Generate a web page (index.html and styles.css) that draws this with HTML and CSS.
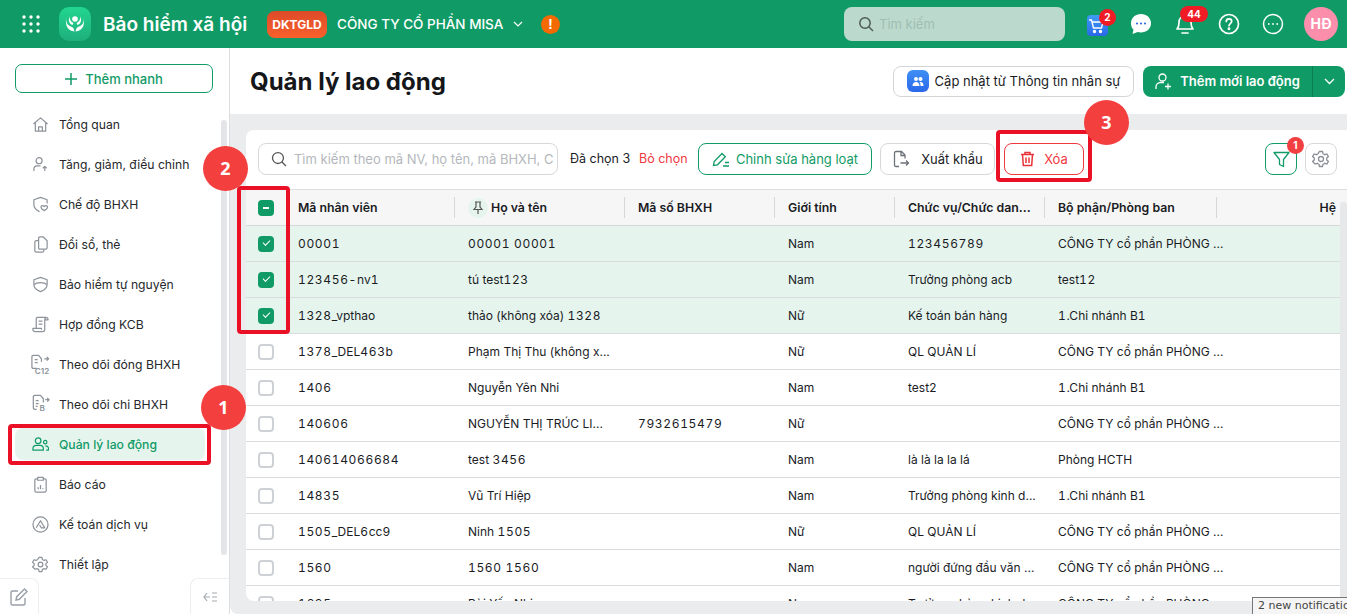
FILE: index.html
```html
<!DOCTYPE html>
<html lang="vi">
<head>
  <meta charset="UTF-8" />
  <title>Bảo hiểm xã hội</title>
  <link rel="stylesheet" href="styles.css">
</head>
<body>

  <!-- thanh trên cùng -->
  <header class="topbar">
    <svg class="waffle" width="18" height="18" viewBox="0 0 18 18" fill="#fff">
      <circle cx="2" cy="2" r="1.7"/><circle cx="9" cy="2" r="1.7"/><circle cx="16" cy="2" r="1.7"/>
      <circle cx="2" cy="9" r="1.7"/><circle cx="9" cy="9" r="1.7"/><circle cx="16" cy="9" r="1.7"/>
      <circle cx="2" cy="16" r="1.7"/><circle cx="9" cy="16" r="1.7"/><circle cx="16" cy="16" r="1.7"/>
    </svg>
    <div class="logo">
      <svg width="24" height="24" viewBox="0 0 24 24" fill="#fff">
        <circle cx="12" cy="7" r="2.8"/>
        <path d="M3 6c0 6 3 8 6 9 1 .4 2 1.500 2.400 4.500-3-.5-7-2-8-6.500-.4-2-.6-5-.4-7z"/>
        <path d="M21 6c0 6-3 8-6 9-1 .4-2 1.500-2.400 4.500 3-.5 7-2 8-6.500.4-2 .6-5 .4-7z"/>
        <path d="M6.500 4.500c0 3 1.500 5.500 4 6.500l-1 2c-3-1-4.500-4-3-8.500zM17.500 4.500c0 3-1.500 5.500-4 6.500l1 2c3-1 4.500-4 3-8.500z"/>
      </svg>
    </div>
    <div class="app-name">Bảo hiểm xã hội</div>
    <div class="org-badge">DKTGLD</div>
    <div class="org-name">CÔNG TY CỔ PHẦN MISA</div>
    <svg class="org-caret" width="10" height="6" viewBox="0 0 10 6" fill="none" stroke="#fff" stroke-width="1.200"><path d="M1 1l4 4 4-4"/></svg>
    <div class="warn">!</div>

    <div class="top-search">
      <svg width="16" height="16" viewBox="0 0 16 16" fill="none" stroke="#4d5a55" stroke-width="1.500"><circle cx="7" cy="7" r="5.200"/><path d="M11 11l4 4"/></svg>
      <span>Tìm kiếm</span>
    </div>

    <div class="top-icons">
      <div class="top-icon">
        <div class="cart">
          <svg width="18" height="18" viewBox="0 0 18 18" fill="none" stroke="#fff" stroke-width="1.400"><path d="M1 3h2.500l2 8h8l1.500-6H4.500"/><circle cx="6.500" cy="14.500" r="1" fill="#fff"/><circle cx="12.500" cy="14.500" r="1" fill="#fff"/></svg>
        </div>
        <span class="count count-cart">2</span>
      </div>
      <div class="top-icon">
        <svg width="22" height="22" viewBox="0 0 22 22"><path d="M11 1c5.500 0 10 3.800 10 9.200s-4.500 9.300-10 9.300c-1.200 0-2.400-.2-3.400-.5L2.500 21l1-4.200C1.900 15.100 1 12.800 1 10.200 1 4.800 5.500 1 11 1z" fill="#fff"/><circle cx="7" cy="10.500" r="1.100" fill="#2f6fe0"/><circle cx="11" cy="10.500" r="1.100" fill="#2f6fe0"/><circle cx="15" cy="10.500" r="1.100" fill="#2f6fe0"/></svg>
      </div>
      <div class="top-icon">
        <svg width="22" height="24" viewBox="0 0 22 24" fill="none" stroke="#fff" stroke-width="1.700"><path d="M3 17c1.500-1.500 2-3 2-6.500C5 6.500 7.500 4 11 4s6 2.500 6 6.500c0 3.500.5 5 2 6.500z" stroke-linejoin="round"/><path d="M8 21h6" stroke-linecap="round"/></svg>
        <span class="count count-bell">44</span>
      </div>
      <div class="top-icon">
        <svg width="22" height="22" viewBox="0 0 22 22" fill="none" stroke="#fff" stroke-width="1.700"><circle cx="11" cy="11" r="9.500"/><path d="M8.300 8.500c0-1.600 1.200-2.600 2.700-2.600s2.700 1 2.700 2.400c0 2.200-2.700 2.300-2.700 4.400" stroke-linecap="round"/><circle cx="11" cy="15.800" r=".6" fill="#fff"/></svg>
      </div>
      <div class="top-icon">
        <svg width="22" height="22" viewBox="0 0 22 22" fill="none" stroke="#fff" stroke-width="1.500"><circle cx="11" cy="11" r="9.500"/><circle cx="6.800" cy="11" r=".9" fill="#fff" stroke="none"/><circle cx="11" cy="11" r=".9" fill="#fff" stroke="none"/><circle cx="15.200" cy="11" r=".9" fill="#fff" stroke="none"/></svg>
      </div>
    </div>
    <div class="avatar">HĐ</div>
  </header>

  <div class="layout">
    <!-- menu trái -->
    <aside class="sidebar">
      <button class="quick-add">
        <svg width="12" height="12" viewBox="0 0 12 12" stroke="#119b66" stroke-width="1.500"><path d="M6 0v12M0 6h12"/></svg>
        Thêm nhanh
      </button>
      <nav class="menu">
        <div class="menu-item">
          <svg class="menu-icon" viewBox="0 0 18 18"><path d="M1.500 8.500L9 2l7.500 6.500M3.500 7v9h11V7M7 16v-4.500h4V16"/></svg>Tổng quan
        </div>
        <div class="menu-item">
          <svg class="menu-icon" viewBox="0 0 18 18"><circle cx="7.500" cy="5" r="3.200"/><path d="M2 16v-2c0-2 1.500-3.500 3.500-3.500h3.500M13.500 16v-5M11.500 13l2-2 2 2"/></svg>Tăng, giảm, điều chỉnh
        </div>
        <div class="menu-item">
          <svg class="menu-icon" viewBox="0 0 18 18"><path d="M16 8V4l-7-2.500L2 4v5c0 3.500 2.500 6 6 7.500"/><path d="M13 11l1-.6c1-.5 2.500.2 2.500 1.500 0 1.500-2 2.800-3.500 3.600-1.500-.8-3.500-2.100-3.500-3.600 0-1.300 1.500-2 2.500-1.500z"/></svg>Chế độ BHXH
        </div>
        <div class="menu-item">
          <svg class="menu-icon" viewBox="0 0 18 18"><path d="M7 5H4.500C3.500 5 3 5.500 3 6.500v9c0 1 .5 1.500 1.500 1.500H11c1 0 1.500-.5 1.500-1.500V14"/><path d="M7 2.500C7 1.500 7.500 1 8.500 1H12l4 4v7.500c0 1-.5 1.500-1.500 1.500h-6C7.500 14 7 13.500 7 12.500z"/></svg>Đổi sổ, thẻ
        </div>
        <div class="menu-item">
          <svg class="menu-icon" viewBox="0 0 18 18"><path d="M9 1.500l7 2.500v5c0 3.500-3 6-7 7.500-4-1.500-7-4-7-7.500V4z"/><path d="M2.500 9C5 6.500 13 6.500 15.500 9"/></svg>Bảo hiểm tự nguyện
        </div>
        <div class="menu-item">
          <svg class="menu-icon" viewBox="0 0 18 18"><path d="M4.500 13V3c0-1 .5-1.500 1.500-1.500h9C14 2 13.500 3 13.500 4v10c0 1.500-1 2.500-2 2.500H3c-1 0-2-.8-2-2v-1.500h9v1.500M7 5.500h4M7 8.500h4M13.500 4H17c0-1.500-.7-2.500-2-2.500"/></svg>Hợp đồng KCB
        </div>
        <div class="menu-item">
          <svg class="menu-icon wide" viewBox="0 0 22 22"><path d="M7 15H3.500C2.500 15 2 14.500 2 13.500V3C2 2 2.500 1.500 3.500 1.500H9L12 5v3M5 6h3M5 9h3M15 5h4M17.500 3l2 2-2 2"/><text x="5" y="21" class="menu-tag">C12</text></svg>Theo dõi đóng BHXH
        </div>
        <div class="menu-item">
          <svg class="menu-icon wide" viewBox="0 0 22 22"><path d="M7 16H5c-1 0-1.500-.5-1.500-1.500V3C3.500 2 4 1.500 5 1.500h6L14 5v4M6 7h3M6 10h3M6 13h2M16 6h3M18 4l2 2-2 2"/><text x="10" y="18" class="menu-tag">B</text></svg>Theo dõi chi BHXH
        </div>
        <div class="menu-item active">
          <svg class="menu-icon" viewBox="0 0 18 18"><circle cx="6.500" cy="5" r="3"/><circle cx="14" cy="6.500" r="1.800"/><path d="M1 15v-1.500C1 11.500 2.500 10 4.500 10h4c2 0 3.500 1.500 3.500 3.500V15zM14 10.500c2 0 3.500 1.500 3.500 3V15H15"/></svg>Quản lý lao động
        </div>
        <div class="menu-item">
          <svg class="menu-icon" viewBox="0 0 18 18"><path d="M6 3H4.500C3.500 3 3 3.500 3 4.500v11c0 1 .5 1.500 1.500 1.500h9c1 0 1.500-.5 1.500-1.500v-11c0-1-.5-1.500-1.500-1.500H12M6 1.500h6v3H6zM6.500 14v-2M9 14V9.500M11.500 14v-1"/></svg>Báo cáo
        </div>
        <div class="menu-item">
          <svg class="menu-icon" viewBox="0 0 18 18"><circle cx="9" cy="9" r="8"/><path d="M4.500 12.500L9 5l4.500 7.500H10L8 9.500"/></svg>Kế toán dịch vụ
        </div>
        <div class="menu-item">
          <svg class="menu-icon" viewBox="0 0 18 18"><circle cx="9" cy="9" r="2.500"/><path d="M7.500 1.500h3l.5 2.200 1.700 1 2.200-.7 1.500 2.600-1.700 1.500v1.800l1.700 1.500-1.500 2.600-2.200-.7-1.700 1-.5 2.200h-3l-.5-2.200-1.700-1-2.200.7L.6 11.400l1.700-1.500V8.100L.6 6.600l1.500-2.600 2.200.7 1.700-1z"/></svg>Thiết lập
        </div>
      </nav>
      <div class="side-bottom">
        <div class="corner-btn corner-left">
          <svg width="20" height="20" viewBox="0 0 20 20" fill="none" stroke="#9aa0a8" stroke-width="1.400"><path d="M9 4H3.500C2.500 4 2 4.500 2 5.500v11c0 1 .5 1.500 1.500 1.500h11c1 0 1.500-.5 1.500-1.500V11"/><path d="M7 13l.7-3.300L15.500 2 18 4.500l-7.700 7.800z"/></svg>
        </div>
        <div class="corner-btn corner-right">
          <svg width="14" height="10" viewBox="0 0 14 10" fill="none" stroke="#a4a9b0" stroke-width="1.200"><path d="M4 1L1 5l3 4M1 5h6M9 1h5M9 5h5M9 9h5"/></svg>
        </div>
      </div>
      <div class="side-scroll"></div>
    </aside>

    <main class="content">
      <div class="page-head">
        <h1>Quản lý lao động</h1>
        <button class="btn-sync">
          <span class="sync-icon">
            <svg width="14" height="12" viewBox="0 0 14 12" fill="#fff"><circle cx="5" cy="4" r="2"/><circle cx="9.500" cy="4" r="2"/><path d="M1.500 11c0-2.500 1.500-4 3.500-4s3.500 1.500 3.500 4zM9.500 11h3c0-2.500-1-4-3-4-.5 0-.8 0-1 .2 1 .8 1 2.300 1 3.800z"/></svg>
          </span>
          Cập nhật từ Thông tin nhân sự
        </button>
        <div class="btn-add">
          <div class="btn-add-main">
            <svg width="17" height="17" viewBox="0 0 17 17" fill="none" stroke="#fff" stroke-width="1.300"><circle cx="7.500" cy="4.500" r="3.500"/><path d="M1 16v-2c0-2.500 2-4.500 4.500-4.500H9M13 10.500v6M10 13.500h6"/></svg>
            Thêm mới lao động
          </div>
          <div class="btn-add-more">
            <svg width="11" height="7" viewBox="0 0 11 7" fill="none" stroke="#fff" stroke-width="1.300"><path d="M1 1l4.500 4.500L10 1"/></svg>
          </div>
        </div>
      </div>

      <div class="panel-wrap">
        <section class="panel">
          <div class="toolbar">
            <div class="list-search">
              <svg width="16" height="16" viewBox="0 0 16 16" fill="none" stroke="#555" stroke-width="1.300"><circle cx="7" cy="7" r="5.500"/><path d="M11 11l4 4"/></svg>
              <span>Tìm kiếm theo mã NV, họ tên, mã BHXH, C</span>
            </div>
            <span class="picked">Đã chọn 3</span>
            <span class="unpick">Bỏ chọn</span>
            <button class="btn btn-green">
              <svg width="18" height="16" viewBox="0 0 18 16" fill="none" stroke="#119b66" stroke-width="1.300"><path d="M1.500 14.500l.7-4L10 2.500l3.300 3.300-7.800 8zM11 15h6M13 11.500h4"/></svg>
              Chỉnh sửa hàng loạt
            </button>
            <button class="btn btn-plain">
              <svg width="18" height="18" viewBox="0 0 18 18" fill="none" stroke="#6d7279" stroke-width="1.300"><path d="M7 16.500H4C3 16.500 2.500 16 2.500 15V3c0-1 .5-1.500 1.500-1.500h5.500L13 5v3.500M9 2v3.500h4M8.500 13H16.500M14 10.500l2.500 2.500-2.500 2.500"/></svg>
              Xuất khẩu
            </button>
            <button class="btn btn-red">
              <svg width="15" height="16" viewBox="0 0 15 16" fill="none" stroke="#e8333a" stroke-width="1.500"><path d="M1 3.500h13M5 3.500V1.500h5v2M2.500 3.500l.8 11h8.400l.8-11M6 6.500v5.500M9 6.500v5.500"/></svg>
              Xóa
            </button>
            <div class="tool-right">
              <div class="square-btn filter">
                <svg width="17" height="17" viewBox="0 0 17 17" fill="none" stroke="#119b66" stroke-width="1.300"><path d="M1 1.500h15l-5.500 7v7l-4-2v-5z" stroke-linejoin="round"/></svg>
                <span class="count count-filter">1</span>
              </div>
              <div class="square-btn gear">
                <svg width="18" height="18" viewBox="0 0 18 18" fill="none" stroke="#8b9097" stroke-width="1.300"><circle cx="9" cy="9" r="2.500"/><path d="M7.500 1.500h3l.5 2.200 1.700 1 2.200-.7 1.500 2.600-1.700 1.500v1.800l1.700 1.500-1.500 2.600-2.200-.7-1.700 1-.5 2.200h-3l-.5-2.200-1.700-1-2.200.7L.6 11.400l1.700-1.500V8.100L.6 6.600l1.500-2.600 2.200.7 1.700-1z"/></svg>
              </div>
            </div>
          </div>

          <table class="grid">
            <colgroup>
              <col class="c-check"><col class="c-code"><col class="c-name"><col class="c-ins"><col class="c-sex"><col class="c-job"><col class="c-dept"><col class="c-rest">
            </colgroup>
            <thead>
              <tr>
                <th class="cell-check"><span class="box box-partial"></span></th>
                <th><span class="th-text">Mã nhân viên</span></th>
                <th>
                  <span class="th-text th-pin">
                    <span class="pin"><svg width="12" height="14" viewBox="0 0 12 14" fill="none" stroke="#555" stroke-width="1.200"><path d="M3 1h6M4 1v5L2 8.500h8L8 6V1M6 8.500V13"/></svg></span>
                    Họ và tên
                  </span>
                </th>
                <th><span class="th-text">Mã số BHXH</span></th>
                <th><span class="th-text">Giới tính</span></th>
                <th><span class="th-text">Chức vụ/Chức dan...</span></th>
                <th><span class="th-text">Bộ phận/Phòng ban</span></th>
                <th class="last"><span class="th-text">Hệ</span></th>
              </tr>
            </thead>
            <tbody>
              <tr class="picked-row"><td class="cell-check"><span class="box box-on"></span></td><td><span class="n">00001</span></td><td><span class="n">00001 00001</span></td><td></td><td>Nam</td><td><span class="n">123456789</span></td><td>CÔNG TY cổ phần PHÒNG ...</td><td></td></tr>
              <tr class="picked-row"><td class="cell-check"><span class="box box-on"></span></td><td><span class="n">123456-</span>nv<span class="n">1</span></td><td>tú test<span class="n">123</span></td><td></td><td>Nam</td><td>Trưởng phòng acb</td><td>test<span class="n">12</span></td><td></td></tr>
              <tr class="picked-row"><td class="cell-check"><span class="box box-on"></span></td><td><span class="n">1328</span>_vpthao</td><td>thảo (không xóa) <span class="n">1328</span></td><td></td><td>Nữ</td><td>Kế toán bán hàng</td><td><span class="n">1</span>.Chi nhánh B<span class="n">1</span></td><td></td></tr>
              <tr><td class="cell-check"><span class="box"></span></td><td><span class="n">1378</span>_DEL<span class="n">463</span>b</td><td>Phạm Thị Thu (không x...</td><td></td><td>Nữ</td><td>QL QUẢN LÍ</td><td>CÔNG TY cổ phần PHÒNG ...</td><td></td></tr>
              <tr><td class="cell-check"><span class="box"></span></td><td><span class="n">1406</span></td><td>Nguyễn Yên Nhi</td><td></td><td>Nam</td><td>test<span class="n">2</span></td><td><span class="n">1</span>.Chi nhánh B<span class="n">1</span></td><td></td></tr>
              <tr><td class="cell-check"><span class="box"></span></td><td><span class="n">140606</span></td><td>NGUYỄN THỊ TRÚC LI...</td><td><span class="n">7932615479</span></td><td>Nữ</td><td></td><td>CÔNG TY cổ phần PHÒNG ...</td><td></td></tr>
              <tr><td class="cell-check"><span class="box"></span></td><td><span class="n">140614066684</span></td><td>test <span class="n">3456</span></td><td></td><td>Nam</td><td>là là la la lá</td><td>Phòng HCTH</td><td></td></tr>
              <tr><td class="cell-check"><span class="box"></span></td><td><span class="n">14835</span></td><td>Vũ Trí Hiệp</td><td></td><td>Nam</td><td>Trưởng phòng kinh d...</td><td><span class="n">1</span>.Chi nhánh B<span class="n">1</span></td><td></td></tr>
              <tr><td class="cell-check"><span class="box"></span></td><td><span class="n">1505</span>_DEL<span class="n">6</span>cc<span class="n">9</span></td><td>Ninh <span class="n">1505</span></td><td></td><td>Nữ</td><td>QL QUẢN LÍ</td><td>CÔNG TY cổ phần PHÒNG ...</td><td></td></tr>
              <tr><td class="cell-check"><span class="box"></span></td><td><span class="n">1560</span></td><td><span class="n">1560 1560</span></td><td></td><td>Nam</td><td>người đứng đầu văn ...</td><td>CÔNG TY cổ phần PHÒNG ...</td><td></td></tr>
              <tr><td class="cell-check"><span class="box"></span></td><td><span class="n">1695</span></td><td>Bùi Yến Nhi</td><td></td><td>Nam</td><td>Trưởng phòng kinh d...</td><td>CÔNG TY cổ phần PHÒNG ...</td><td></td></tr>
            </tbody>
          </table>
          <div class="grid-scroll"></div>
        </section>
      </div>
    </main>
  </div>

  <!-- khung đỏ và số thứ tự chú thích -->
  <div class="mark mark-menu"></div>
  <div class="mark mark-check"></div>
  <div class="mark mark-delete"></div>
  <div class="step step-1">1</div>
  <div class="step step-2">2</div>
  <div class="step step-3">3</div>

  <div class="status-tip">2 new notifications</div>

</body>
</html>
```

FILE: styles.css
```css
* {
  box-sizing: border-box;
}

html, body {
  margin: 0;
  height: 614px;
  overflow: hidden;
}

body {
  position: relative;
  font-family: Inter, "Noto Sans", sans-serif;
  font-size: 13px;
  color: #1a1c1f;
  background: #fff;
}

button {
  font-family: inherit;
}

/* top bar */
.topbar {
  height: 48px;
  background: #109b66;
  display: flex;
  align-items: center;
  color: #fff;
}

.waffle {
  margin-left: 22px;
}

.logo {
  width: 32px;
  height: 34px;
  margin-left: 19px;
  border-radius: 10px;
  background: linear-gradient(180deg, #22d68f, #1faf7c);
  display: flex;
  align-items: center;
  justify-content: center;
}

.app-name {
  margin-left: 12px;
  font-size: 19px;
  font-weight: 600;
  white-space: nowrap;
  width: 164px;
}

.org-badge {
  width: 60px;
  height: 27px;
  border-radius: 8px;
  background: linear-gradient(180deg, #dd4a28, #f9602c);
  font-size: 12px;
  font-weight: 700;
  display: flex;
  align-items: center;
  justify-content: center;
}

.org-name {
  margin-left: 10px;
  font-size: 13.500px;
  font-weight: 500;
  white-space: nowrap;
  width: 170px;
}

.org-caret {
  margin-left: 6px;
}

.warn {
  width: 19px;
  height: 19px;
  margin-left: 18px;
  border-radius: 50%;
  background: #f56a00;
  font-size: 13px;
  font-weight: 700;
  text-align: center;
  line-height: 19px;
}

.top-search {
  width: 221px;
  height: 34px;
  margin-left: 284px;
  padding-left: 14px;
  border-radius: 8px;
  background: #bcd9cd;
  display: flex;
  align-items: center;
  gap: 5px;
  color: #9fbfb2;
  font-size: 13px;
}

.top-icons {
  display: flex;
  margin-left: 17px;
  gap: 14px;
}

.top-icon {
  position: relative;
  width: 30px;
  height: 30px;
  display: flex;
  align-items: center;
  justify-content: center;
}

.cart {
  width: 21px;
  height: 21px;
  margin-top: 3px;
  border-radius: 4px;
  background: linear-gradient(180deg, #3f9cf5, #2a68e8);
  display: flex;
  align-items: center;
  justify-content: center;
}

.count {
  position: absolute;
  background: #f01b24;
  color: #fff;
  font-size: 10px;
  font-weight: 700;
  text-align: center;
  border-radius: 9px;
}

.count-cart {
  top: 0;
  right: -4px;
  width: 17px;
  height: 17px;
  line-height: 17px;
}

.count-bell {
  top: -3px;
  left: 10px;
  width: 28px;
  height: 16px;
  line-height: 16px;
}

.avatar {
  width: 34px;
  height: 34px;
  margin-left: 16px;
  border-radius: 50%;
  background: #fb8fab;
  font-size: 14px;
  font-weight: 700;
  text-align: center;
  line-height: 34px;
}

/* layout */
.layout {
  display: flex;
  height: 566px;
}

.sidebar {
  position: relative;
  width: 230px;
  flex: none;
  padding: 16px 0 0 15px;
  border-right: 1px solid #dcdee0;
}

.quick-add {
  width: 198px;
  height: 29px;
  border: 1px solid #119b66;
  border-radius: 7px;
  background: #fff;
  color: #119b66;
  font-size: 13px;
  font-weight: 500;
  display: flex;
  align-items: center;
  justify-content: center;
  gap: 8px;
}

.menu {
  margin-top: 15px;
  display: flex;
  flex-direction: column;
  gap: 8px;
  width: 190px;
}

.menu-item {
  height: 32px;
  padding-left: 17px;
  border-radius: 8px;
  display: flex;
  align-items: center;
  gap: 10px;
  white-space: nowrap;
  font-size: 12.200px;
  color: #26282b;
}

.menu-item.active {
  background: #e6f4ee;
  color: #119b66;
  font-weight: 500;
}

.menu-icon {
  width: 17px;
  height: 17px;
  flex: none;
  fill: none;
  stroke: #8d939b;
  stroke-width: 1.300;
  stroke-linejoin: round;
}

.menu-icon.wide {
  width: 21px;
  height: 21px;
  margin-left: -2px;
  margin-right: -2px;
}

.menu-tag {
  font-size: 8.500px;
  fill: #8d939b;
  stroke: none;
  font-weight: 600;
}

.active .menu-icon {
  stroke: #119b66;
}

.side-bottom {
  position: absolute;
  left: 0;
  right: 0;
  bottom: 0;
  height: 36px;
  display: flex;
  justify-content: space-between;
}

.corner-btn {
  width: 39px;
  height: 36px;
  background: #fff;
  border: 1px solid #eceef0;
  border-bottom: none;
  display: flex;
  align-items: center;
  justify-content: center;
}

.corner-left {
  border-left: none;
  border-top-right-radius: 8px;
}

.corner-right {
  border-right: none;
  border-top-left-radius: 8px;
}

.side-scroll {
  position: absolute;
  top: 72px;
  left: 221px;
  width: 6px;
  height: 435px;
  border-radius: 3px;
  background: #e3e5e8;
}

/* content */
.content {
  flex: 1;
  min-width: 0;
  display: flex;
  flex-direction: column;
}

.page-head {
  height: 66px;
  flex: none;
  display: flex;
  align-items: center;
  padding: 0 2px 0 20px;
}

.page-head h1 {
  margin: 0 auto 0 0;
  font-size: 24px;
  font-weight: 700;
  color: #14161a;
}

.btn-sync {
  width: 241px;
  height: 31px;
  margin-right: 9px;
  border: 1px solid #d3d5d8;
  border-radius: 8px;
  background: #fff;
  color: #1a1c1f;
  font-size: 13px;
  display: flex;
  align-items: center;
  justify-content: center;
  gap: 6px;
}

.sync-icon {
  width: 22px;
  height: 22px;
  border-radius: 6px;
  background: linear-gradient(180deg, #3f8ff5, #2a68e8);
  display: flex;
  align-items: center;
  justify-content: center;
}

.btn-add {
  width: 202px;
  height: 31px;
  border-radius: 8px;
  background: #109b66;
  color: #fff;
  font-weight: 600;
  display: flex;
}

.btn-add-main {
  flex: 1;
  display: flex;
  align-items: center;
  justify-content: center;
  gap: 8px;
  border-right: 1px solid #0c7d52;
}

.btn-add-more {
  width: 32px;
  display: flex;
  align-items: center;
  justify-content: center;
}

.panel-wrap {
  flex: 1;
  min-height: 0;
  padding: 16px 0 13px 16px;
  background: #ebecee;
  border-bottom-left-radius: 8px;
}

.panel {
  position: relative;
  height: 100%;
  background: #fff;
  border-radius: 8px 0 0 8px;
  overflow: hidden;
}

.toolbar {
  height: 59px;
  padding: 13px 10px 0 12px;
  display: flex;
  align-items: flex-start;
  white-space: nowrap;
}

.list-search {
  width: 300px;
  height: 32px;
  padding: 0 0 0 12px;
  border: 1px solid #d6d8db;
  border-radius: 8px;
  display: flex;
  align-items: center;
  gap: 7px;
  color: #b4b7bb;
  overflow: hidden;
}

.list-search span {
  overflow: hidden;
  width: 264px;
}

.picked {
  width: 69px;
  margin-left: 12px;
  line-height: 32px;
  font-size: 12.500px;
}

.unpick {
  width: 59px;
  line-height: 32px;
  font-size: 12.500px;
  color: #f0393f;
}

.btn {
  height: 32px;
  background: #fff;
  border-radius: 8px;
  font-size: 13px;
  display: flex;
  align-items: center;
  justify-content: center;
  gap: 6px;
}

.btn-green {
  width: 174px;
  border: 1px solid #119b66;
  color: #119b66;
}

.btn-plain {
  width: 115px;
  margin-left: 8px;
  border: 1px solid #d6d8db;
  color: #1a1c1f;
  gap: 11px;
}

.btn-red {
  width: 80px;
  margin-left: 9px;
  border: 1px solid #f0393f;
  color: #f0393f;
  gap: 9px;
}

.tool-right {
  margin-left: auto;
  display: flex;
  gap: 8px;
}

.square-btn {
  position: relative;
  width: 32px;
  height: 32px;
  border-radius: 8px;
  display: flex;
  align-items: center;
  justify-content: center;
}

.filter {
  border: 1px solid #119b66;
  background: #fff;
}

.gear {
  border: 1px solid #d6d8db;
}

.count-filter {
  top: -7px;
  right: -8px;
  width: 17px;
  height: 17px;
  line-height: 17px;
  background: #f23f42;
}

/* table */
.grid {
  width: 1101px;
  table-layout: fixed;
  border-collapse: collapse;
}

.c-check { width: 40px; }
.c-code { width: 170px; }
.c-name { width: 170px; }
.c-ins { width: 150px; }
.c-sex { width: 120px; }
.c-job { width: 150px; }
.c-dept { width: 172px; }
.c-rest { width: 129px; }

.grid th {
  height: 36px;
  padding: 0;
  background: #f6f6f7;
  border-top: 1px solid #dcdee0;
  border-bottom: 1px solid #d5d7da;
  font-size: 12.300px;
  font-weight: 600;
  text-align: left;
}

.th-text {
  display: flex;
  align-items: center;
  height: 21px;
  margin-right: 1px;
  padding: 0 12px;
  border-right: 1px solid #d5d7da;
  white-space: nowrap;
}

.grid .last .th-text {
  border-right: none;
  justify-content: flex-end;
  padding-right: 10px;
}

.th-pin {
  gap: 3px;
}

.pin {
  width: 20px;
  height: 20px;
  border-radius: 50%;
  background: #e6f4ee;
  display: flex;
  align-items: center;
  justify-content: center;
}

.grid td {
  height: 36px;
  padding: 0 0 0 12px;
  border-bottom: 1px solid #d9dbde;
  white-space: nowrap;
  font-size: 12px;
}

.n {
  font-variant-numeric: tabular-nums;
  letter-spacing: .65px;
}

.picked-row td {
  background: #e6f4ee;
}

.box {
  display: block;
  width: 16px;
  height: 16px;
  border: 2px solid #ced1d5;
  border-radius: 4px;
  background: #fff;
  position: relative;
}

.box-on, .box-partial {
  border-color: #109b66;
  background: #109b66;
}

.grid th.cell-check {
  padding-left: 12px;
}

.box-on::after {
  content: "";
  position: absolute;
  left: 3px;
  top: 2px;
  width: 6px;
  height: 3px;
  border-left: 1.500px solid #fff;
  border-bottom: 1.500px solid #fff;
  transform: rotate(-45deg);
}

.box-partial::after {
  content: "";
  position: absolute;
  left: 3px;
  top: 5px;
  width: 6px;
  height: 2px;
  background: #fff;
}

.grid-scroll {
  position: absolute;
  top: 72px;
  right: 0;
  width: 7px;
  height: 400px;
  background: #e7e8ea;
  border-radius: 3px;
}

/* annotation */
.mark {
  position: absolute;
  border: 4px solid #ea1127;
  border-radius: 4px;
}

.mark-menu {
  left: 8px;
  top: 424px;
  width: 203px;
  height: 41px;
}

.mark-check {
  left: 237px;
  top: 186px;
  width: 53px;
  height: 148px;
}

.mark-delete {
  left: 996px;
  top: 130px;
  width: 96px;
  height: 52px;
}

.step {
  position: absolute;
  width: 45px;
  height: 45px;
  border-radius: 50%;
  background: #f43f3f;
  color: #fff;
  font-size: 18px;
  font-weight: 700;
  font-family: "Open Sans", sans-serif;
  text-align: center;
  line-height: 45px;
}

.step-1 { left: 201px; top: 385px; }
.step-2 { left: 203px; top: 146px; }
.step-3 { left: 1084px; top: 100px; }

.status-tip {
  position: absolute;
  left: 1252px;
  top: 597px;
  width: 110px;
  height: 20px;
  padding: 1px 0 0 5px;
  background: #f5f5f5;
  border: 1px solid #777;
  font-family: "DejaVu Sans", sans-serif;
  font-size: 11px;
  white-space: nowrap;
  color: #444;
}
```
